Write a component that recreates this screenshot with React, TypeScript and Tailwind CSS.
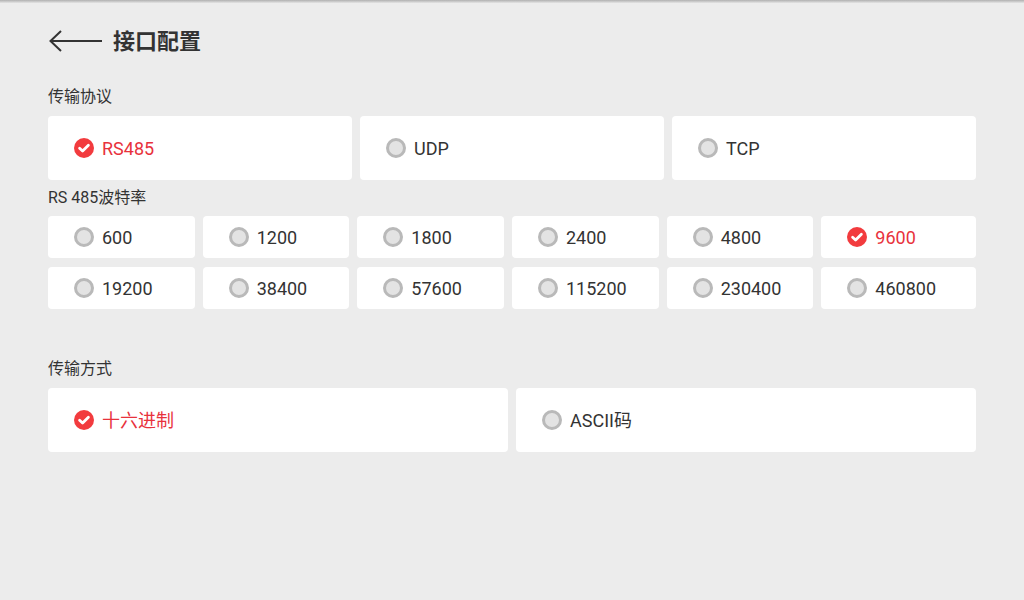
import { useState } from 'react';

const protocols = ['RS485', 'UDP', 'TCP'];
const bauds = ['600', '1200', '1800', '2400', '4800', '9600', '19200', '38400', '57600', '115200', '230400', '460800'];
const modes = ['十六进制', 'ASCII码'];

function Radio({ checked }: { checked: boolean }) {
  if (checked) {
    return (
      <svg width="20" height="20" viewBox="0 0 20 20" className="shrink-0">
        <circle cx="10" cy="10" r="10" fill="#f23b3e" />
        <path d="M5.6 10.2 L8.6 13.1 L14.4 7.3" fill="none" stroke="#fff" strokeWidth="2.8" strokeLinecap="round" strokeLinejoin="round" />
      </svg>
    );
  }
  return <span className="w-5 h-5 shrink-0 rounded-full border-[3px] border-[#b9b9b9] bg-[#e3e3e3]" />;
}

function Option({ label, checked, onClick, tall }: { label: string; checked: boolean; onClick: () => void; tall?: boolean }) {
  return (
    <button
      type="button"
      onClick={onClick}
      className={`w-full ${tall ? 'h-[64px]' : 'h-[42px]'} bg-white rounded flex items-center gap-2 pl-[26px] text-[18px] ${checked ? 'text-[#e8323c]' : 'text-[#333333]'}`}
    >
      <Radio checked={checked} />
      <span className="pt-[1px]">{label}</span>
    </button>
  );
}

export default function App() {
  const [protocol, setProtocol] = useState('RS485');
  const [baud, setBaud] = useState('9600');
  const [mode, setMode] = useState('十六进制');

  return (
    <div
      className="w-[1024px] h-[600px] bg-[#ececec] overflow-hidden"
      style={{ fontFamily: 'Roboto, "Noto Sans CJK SC", sans-serif' }}
    >
      <div className="h-[3px] bg-gradient-to-b from-[#b0b0b0] to-[#e4e4e4]" />

      <div className="px-12">
        {/* Header */}
        <div className="h-[74px] flex items-center">
          <svg width="54" height="22" viewBox="0 0 54 22" className="ml-[1px] mt-[1px]">
            <path d="M1.5 11 H53" stroke="#333" strokeWidth="2" fill="none" />
            <path d="M12 1 L1.5 11 L12 21" stroke="#333" strokeWidth="2" fill="none" strokeLinejoin="miter" />
          </svg>
          <h1 className="ml-[10px] pt-[2px] text-[22px] font-bold text-[#333333]">接口配置</h1>
        </div>

        {/* Protocol */}
        <div className="mt-[8px] mb-[7px] h-[24px] leading-[24px] text-[16px] text-[#333333]">传输协议</div>
        <div className="grid grid-cols-3 gap-2">
          {protocols.map(p => (
            <Option key={p} label={p} tall checked={protocol === p} onClick={() => setProtocol(p)} />
          ))}
        </div>

        {/* Baud rate */}
        <div className="mt-[6px] mb-[6px] h-[24px] leading-[24px] text-[16px] text-[#333333]">RS 485波特率</div>
        <div className="grid grid-cols-6 gap-y-[9px]">
          {bauds.map((b, i) => (
            <div key={b} className={i % 6 === 5 ? '' : 'pr-2'}>
              <Option label={b} checked={baud === b} onClick={() => setBaud(b)} />
            </div>
          ))}
        </div>

        {/* Transfer mode */}
        <div className="mt-[48px] mb-[7px] h-[24px] leading-[24px] text-[16px] text-[#333333]">传输方式</div>
        <div className="grid grid-cols-2 gap-2">
          {modes.map(m => (
            <Option key={m} label={m} tall checked={mode === m} onClick={() => setMode(m)} />
          ))}
        </div>
      </div>
    </div>
  );
}
